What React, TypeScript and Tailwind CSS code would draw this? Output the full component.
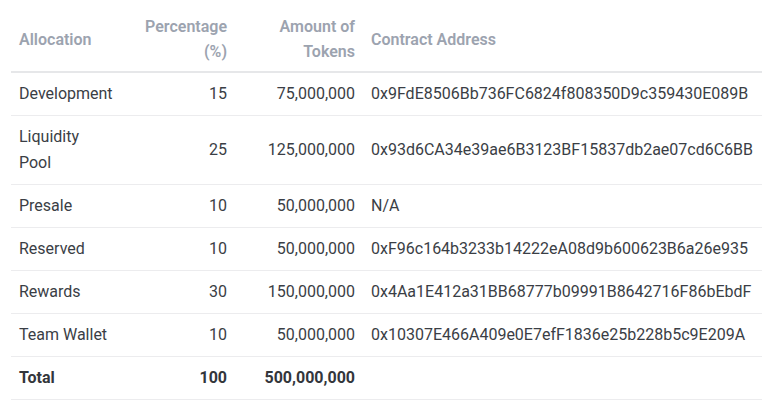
import React from "react"

interface Allocation {
  name: string
  percent: number
  amount: string
  address: string
}

const allocations: Allocation[] = [
  { name: "Development", percent: 15, amount: "75,000,000", address: "0x9FdE8506Bb736FC6824f808350D9c359430E089B" },
  { name: "Liquidity Pool", percent: 25, amount: "125,000,000", address: "0x93d6CA34e39ae6B3123BF15837db2ae07cd6C6BB" },
  { name: "Presale", percent: 10, amount: "50,000,000", address: "N/A" },
  { name: "Reserved", percent: 10, amount: "50,000,000", address: "0xF96c164b3233b14222eA08d9b600623B6a26e935" },
  { name: "Rewards", percent: 30, amount: "150,000,000", address: "0x4Aa1E412a31BB68777b09991B8642716F86bEbdF" },
  { name: "Team Wallet", percent: 10, amount: "50,000,000", address: "0x10307E466A409e0E7efF1836e25b228b5c9E209A" },
]

const th = "px-2 pt-2 pb-[7px] leading-[25px] font-semibold text-[#9ca3af] align-middle"
const td = "px-2 py-2 leading-[26px] align-middle"

export default function App() {
  return (
    <div className="w-[775px] h-[404px] bg-white px-[11px] pt-[6px] font-['Roboto',sans-serif] text-base text-[#3a3e45]">
      <table className="w-[751px] table-fixed border-collapse">
        <colgroup>
          <col className="w-[109px]" />
          <col className="w-[115px]" />
          <col className="w-[128px]" />
          <col className="w-[399px]" />
        </colgroup>
        <thead>
          <tr className="border-b-2 border-[#e6e7e9]">
            <th className={`${th} text-left`}>Allocation</th>
            <th className={`${th} text-right`}>Percentage (%)</th>
            <th className={`${th} text-right`}>Amount of Tokens</th>
            <th className={`${th} text-left`}>Contract Address</th>
          </tr>
        </thead>
        <tbody>
          {allocations.map((a) => (
            <tr key={a.name} className="border-b border-[#ececee]">
              <td className={`${td} text-left`}>{a.name}</td>
              <td className={`${td} text-right`}>{a.percent}</td>
              <td className={`${td} text-right`}>{a.amount}</td>
              <td className={`${td} text-left whitespace-nowrap`}>{a.address}</td>
            </tr>
          ))}
          <tr className="border-b border-[#ececee] font-bold text-[#33363b]">
            <td className={`${td} text-left`}>Total</td>
            <td className={`${td} text-right`}>100</td>
            <td className={`${td} text-right`}>500,000,000</td>
            <td className={td}></td>
          </tr>
        </tbody>
      </table>
    </div>
  )
}
